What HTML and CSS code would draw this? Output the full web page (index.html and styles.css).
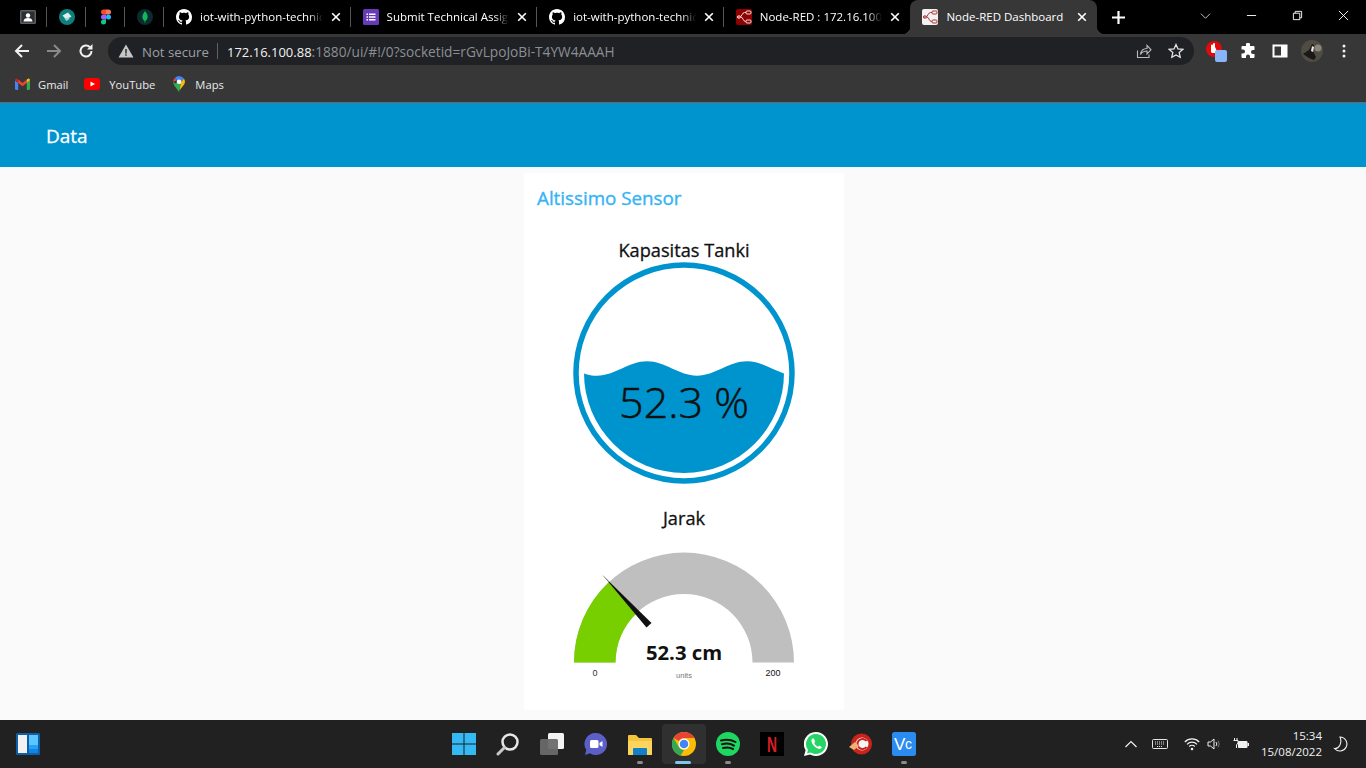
FILE: index.html
```html
<!DOCTYPE html>
<html lang="en">
<head>
<meta charset="utf-8">
<title>Node-RED Dashboard</title>
<link rel="stylesheet" href="styles.css">
</head>
<body>
<svg class="defs" width="0" height="0">
  <symbol id="gh" viewBox="0 0 16 16"><path fill="#fff" d="M8 0C3.58 0 0 3.58 0 8c0 3.54 2.29 6.53 5.47 7.59.4.07.55-.17.55-.38 0-.19-.01-.82-.01-1.49-2.01.37-2.53-.49-2.69-.94-.09-.23-.48-.94-.82-1.13-.28-.15-.68-.52-.01-.53.63-.01 1.08.58 1.23.82.72 1.21 1.87.87 2.33.66.07-.52.28-.87.51-1.07-1.78-.2-3.64-.89-3.64-3.95 0-.87.31-1.59.82-2.15-.08-.2-.36-1.02.08-2.12 0 0 .67-.21 2.2.82.64-.18 1.32-.27 2-.27.68 0 1.36.09 2 .27 1.53-1.04 2.2-.82 2.2-.82.44 1.1.16 1.92.08 2.12.51.56.82 1.27.82 2.15 0 3.07-1.87 3.75-3.65 3.95.29.25.54.73.54 1.48 0 1.07-.01 1.93-.01 2.2 0 .21.15.46.55.38A8.013 8.013 0 0016 8c0-4.42-3.58-8-8-8z"/></symbol>
  <symbol id="x" viewBox="0 0 10 10"><path d="M1.2 1.2l7.6 7.6M8.8 1.2L1.2 8.8" stroke="#fff" stroke-width="1.6" fill="none"/></symbol>
  <symbol id="flow" viewBox="0 0 16 16"><g fill="none" stroke="currentColor" stroke-width="1"><path d="M1 8h2.500c2.500 0 2.500-4.500 5-4.500H10M5 8c2 0 2 4.500 4.500 4.500H10"/><rect x="10" y="2" width="5" height="3" rx="1"/><rect x="10" y="11" width="5" height="3" rx="1"/><rect x="1.500" y="6.800" width="3" height="2.400" rx="1"/></g></symbol>
</svg>

<div class="tabstrip">
  <div class="pin"><svg class="ico16" viewBox="0 0 16 16"><rect y="1" width="16" height="14" rx="1.500" fill="#5b5f63"/><rect x="1.500" y="2.500" width="13" height="11" fill="#2b2d30"/><circle cx="8" cy="6.500" r="2.200" fill="#fff"/><path d="M3.500 12.500c0-2.500 2-3.500 4.500-3.500s4.500 1 4.500 3.500z" fill="#fff"/></svg></div>
  <div class="pin"><svg class="ico16" viewBox="0 0 16 16"><circle cx="8" cy="8" r="8" fill="#0f7f7c"/><path d="M3.500 6.500L9 3.500l3.500 4-5.500 3z" fill="#d9efee"/><path d="M5.500 9.500l2 2.500 3-2-.5-1.500z" fill="#9fd3d0"/></svg></div>
  <div class="pin"><svg class="ico16" viewBox="0 0 16 16"><path d="M8 0.500H5.500a2.500 2.500 0 000 5H8z" fill="#f24e1e"/><path d="M8 0.500h2.500a2.500 2.500 0 010 5H8z" fill="#ff7262"/><path d="M8 5.500H5.500a2.500 2.500 0 000 5H8z" fill="#a259ff"/><circle cx="10.500" cy="8" r="2.500" fill="#1abcfe"/><path d="M5.500 10.500H8V13a2.500 2.500 0 11-2.500-2.500z" fill="#0acf83"/></svg></div>
  <div class="pin"><svg class="ico16" viewBox="0 0 16 16"><circle cx="8" cy="8" r="8" fill="#0b2b2e"/><path d="M8 2c2 2.500 2.800 4.300 2.600 6.200C10.400 10.300 9 11.500 8.300 12L8.200 14h-.5l-.1-2C6.800 11.400 5.500 10.200 5.400 8.200 5.300 6.200 6.300 4.300 8 2z" fill="#12b75a"/></svg></div>

  <div class="tab sep"><svg class="ico16"><use href="#gh"/></svg><span class="title">iot-with-python-technic</span><svg class="close"><use href="#x"/></svg></div>
  <div class="tab sep"><svg class="ico16" viewBox="0 0 16 16"><rect width="16" height="16" rx="1.500" fill="#673ab7"/><path d="M3.500 4.500h1.500V6H3.500zM6 4.500h6.500V6H6zM3.500 7.300h1.500v1.500H3.500zM6 7.300h6.500v1.500H6zM3.500 10h1.500v1.500H3.500zM6 10h6.500v1.500H6z" fill="#fff"/></svg><span class="title">Submit Technical Assign</span><svg class="close"><use href="#x"/></svg></div>
  <div class="tab sep"><svg class="ico16"><use href="#gh"/></svg><span class="title">iot-with-python-technic</span><svg class="close"><use href="#x"/></svg></div>
  <div class="tab"><span class="nr nr-dark"><svg class="ico16"><use href="#flow"/></svg></span><span class="title">Node-RED : 172.16.100</span><svg class="close"><use href="#x"/></svg></div>
  <div class="tab active"><span class="nr nr-light"><svg class="ico16"><use href="#flow"/></svg></span><span class="title">Node-RED Dashboard</span><svg class="close"><use href="#x"/></svg></div>
  <div class="newtab"><svg class="plus" viewBox="0 0 12 12"><path d="M6 0v12M0 6h12" stroke="#fff" stroke-width="2"/></svg></div>
  <div class="winctl">
    <span class="wbtn"><svg class="wico" viewBox="0 0 12 12"><path d="M1 4l5 5 5-5" fill="none" stroke="#ccc"/></svg></span>
    <span class="wbtn"><svg class="wico" viewBox="0 0 12 12"><path d="M1 6h10" stroke="#fff"/></svg></span>
    <span class="wbtn"><svg class="wico" viewBox="0 0 12 12"><path d="M1.500 3.500h7v7h-7zM3.500 3.500v-2h7v7h-2" fill="none" stroke="#fff"/></svg></span>
    <span class="wbtn"><svg class="wico" viewBox="0 0 12 12"><path d="M1 1l10 10M11 1L1 11" stroke="#fff"/></svg></span>
  </div>
</div>

<div class="toolbar">
  <span class="tbtn"><svg class="ico16" viewBox="0 0 16 16"><path d="M15 8H2M8 2L2 8l6 6" fill="none" stroke="#f1f1f1" stroke-width="2"/></svg></span>
  <span class="tbtn"><svg class="ico16" viewBox="0 0 16 16"><path d="M1 8h13M8 2l6 6-6 6" fill="none" stroke="#8a8a8a" stroke-width="2"/></svg></span>
  <span class="tbtn"><svg class="ico16" viewBox="0 0 16 16"><path d="M13.500 8a5.500 5.500 0 11-1.700-4" fill="none" stroke="#f1f1f1" stroke-width="2"/><path d="M14.500 1v5.500H9z" fill="#f1f1f1"/></svg></span>
  <div class="omni">
    <svg class="ico16" viewBox="0 0 16 16"><path d="M8 1.500L15.500 14.500H.5z" fill="#c4c7c5"/><path d="M7.300 6h1.400v4.500H7.300zM7.300 11.300h1.400v1.400H7.300z" fill="#202124"/></svg>
    <span class="insecure">Not secure</span>
    <span class="omnisep"></span>
    <span class="url"><b class="host">172.16.100.88</b><span class="path">:1880/ui/#!/0?socketid=rGvLpoJoBi-T4YW4AAAH</span></span>
    <span class="omni-right">
      <span class="tbtn"><svg class="ico16" viewBox="0 0 16 16"><path d="M1.500 7.500v7h11.500v-3" fill="none" stroke="#bbb" stroke-width="1.100"/><path d="M4.500 11.500c.5-4 3.500-6 6.500-6V2.500l4 4.300-4 4V8c-3 0-5 1-6.500 3.500z" fill="none" stroke="#bbb" stroke-width="1.100"/></svg></span>
      <span class="tbtn"><svg class="ico16" viewBox="0 0 16 16"><path d="M8 1.500l2 4.400 4.800.5-3.600 3.200 1 4.700L8 11.900l-4.200 2.400 1-4.700L1.200 6.400 6 5.900z" fill="none" stroke="#e3e3e3" stroke-width="1.300"/></svg></span>
    </span>
  </div>
  <span class="tbtn ml6 ext"><svg class="ico22" viewBox="0 0 22 22"><circle cx="9" cy="9" r="8" fill="#e00a0a"/><path d="M6 12V5.500a1 1 0 012 0V4a1 1 0 012 0v3l1.500 3-1 3H7z" fill="#fff"/><rect x="10" y="10" width="12" height="12" rx="2" fill="#8ab4f8"/></svg></span>
  <span class="tbtn"><svg class="ico16" viewBox="0 0 16 16"><path d="M6 1.500a2 2 0 014 0V3h3.500a1 1 0 011 1v3H13a2 2 0 000 4h1.500v3a1 1 0 01-1 1H10v-1.500a2 2 0 00-4 0V15H2.500a1 1 0 01-1-1v-3.500H3a2 2 0 000-4H1.500V4a1 1 0 011-1H6z" fill="#fff"/></svg></span>
  <span class="tbtn"><svg class="ico16" viewBox="0 0 16 16"><path d="M1.500 2.500h13v11h-13z" fill="none" stroke="#fff" stroke-width="2"/><rect x="9" y="2" width="6" height="12" fill="#fff"/></svg></span>
  <span class="tbtn"><svg class="ico22" viewBox="0 0 22 22"><circle cx="11" cy="11" r="11" fill="#4f4c44"/><path d="M2 14l6-4 3-6 2 1-1 6 3 6-2 3-5-2z" fill="#1a1916"/><path d="M11 6l2 1-1 5-2-1z" fill="#e8e8e8"/><circle cx="17" cy="8" r="3.500" fill="#8a867a"/></svg></span>
  <span class="tbtn"><svg class="ico16" viewBox="0 0 16 16"><circle cx="8" cy="3" r="1.500" fill="#f1f1f1"/><circle cx="8" cy="8" r="1.500" fill="#f1f1f1"/><circle cx="8" cy="13" r="1.500" fill="#f1f1f1"/></svg></span>
</div>

<div class="bookmarks">
  <span class="bm bm-g"><svg class="ico-bm" viewBox="0 0 14 11"><path d="M0 2v8a1 1 0 001 1h2V4.500z" fill="#4285f4"/><path d="M14 2v8a1 1 0 01-1 1h-2V4.500z" fill="#34a853"/><path d="M0 2a1.500 1.500 0 012.400-1.200L3 1.300V4.500z" fill="#c5221f"/><path d="M3 1.300L7 4.500l4-3.200v3.200L7 7.500 3 4.500z" fill="#ea4335"/><path d="M14 2a1.500 1.500 0 00-2.400-1.200l-.6.500v3.200z" fill="#fbbc04"/></svg>Gmail</span>
  <span class="bm bm-y"><svg class="ico-bm" viewBox="0 0 16 12"><rect width="16" height="12" rx="3" fill="#f00"/><path d="M6.500 3.500L11 6l-4.500 2.500z" fill="#fff"/></svg>YouTube</span>
  <span class="bm bm-m"><svg class="ico-map" viewBox="0 0 12 16"><path d="M6 16C5 12 0 9.500 0 5.800L2.500 8z" fill="#34a853"/><path d="M6 16c1-4 6-6.500 6-10.200L8 9z" fill="#fbbc04"/><path d="M2 1.700A6 6 0 000 5.800L4 4.400z" fill="#ea4335"/><path d="M2 1.700A6 6 0 0111 2.700L8 6 4 4.400z" fill="#4285f4"/><path d="M11 2.700A6 6 0 0112 5.800L7 13 2 8l6-2z" fill="#fbbc04"/><path d="M1 9l3 -3 4 2-2 8z" fill="#34a853"/><circle cx="6" cy="5.800" r="2.200" fill="#fff"/></svg>Maps</span>
</div>

<div class="ui-header"><span class="ui-title">Data</span></div>

<main class="content">
  <section class="card">
    <h2 class="group">Altissimo Sensor</h2>
    <h3 class="wlabel first">Kapasitas Tanki</h3>
    <svg class="liquid" viewBox="0 0 222 222" width="222" height="222">
      <defs><clipPath id="inner"><circle cx="111" cy="111" r="100"/></clipPath></defs>
      <circle cx="111" cy="111" r="108" fill="none" stroke="#0094ce" stroke-width="5.500"/>
      <path clip-path="url(#inner)" fill="#0094ce" d="M-26 99.300C-8 99.300 6 113.700 24 113.700S56 99.300 74 99.300 106 113.700 124 113.700 156 99.300 174 99.300 206 113.700 224 113.700V222H-26z"/>
      <text class="ltext" x="111" y="155.500" text-anchor="middle">52.3 %</text>
    </svg>
    <h3 class="wlabel second">Jarak</h3>
    <svg class="gauge" viewBox="0 0 240 146" width="240" height="146">
      <path fill="#bfbfbf" d="M10 120.500a110 110 0 01220 0h-41.500a68.500 68.500 0 00-137 0z"/>
      <path fill="#78cf00" d="M10 120.500A110 110 0 0145 40l28.700 30.200A68.500 68.500 0 0051.500 120.500z"/>
      <path fill="#111" d="M39 33.500L87.500 81l-5 4.500z"/>
      <path stroke="#999" stroke-width=".6" d="M39 33.500l6 6.500"/>
      <text class="gval" x="120" y="118" text-anchor="middle">52.3 cm</text>
      <text class="gmin" x="31" y="134" text-anchor="middle">0</text>
      <text class="gunit" x="120" y="136" text-anchor="middle">units</text>
      <text class="gmax" x="209" y="134" text-anchor="middle">200</text>
    </svg>
  </section>
</main>

<footer class="taskbar">
  <div class="tb-left"><svg class="widgets" viewBox="0 0 24 22"><rect width="24" height="22" rx="1.500" fill="#0f5fa8"/><rect x="2" y="2" width="9" height="18" fill="#f2f2f2"/><rect x="13" y="2" width="9" height="10" fill="#5cc6ff"/><rect x="13" y="12" width="9" height="4" fill="#22a3f5"/><rect x="13" y="16" width="9" height="4" fill="#0d86e6"/></svg></div>
  <div class="tb-center">
    <span class="tk"><svg class="ico24" viewBox="0 0 24 24"><path d="M0 1h11.500v10.500H0zM12.500 1H24v10.500H12.500zM0 12.500h11.500V23H0zM12.500 12.500H24V23H12.500z" fill="#35b9f5"/></svg></span>
    <span class="tk"><svg class="ico24" viewBox="0 0 24 24"><circle cx="14" cy="10" r="7.500" fill="none" stroke="#e8e8e8" stroke-width="2.500"/><path d="M8.500 15.500L2 22" stroke="#c8c8c8" stroke-width="3" stroke-linecap="round"/></svg></span>
    <span class="tk"><svg class="ico24" viewBox="0 0 24 24"><rect x="8" y="1" width="16" height="16" rx="1.500" fill="#f4f4f4"/><rect x="0" y="7" width="18" height="16" rx="1.500" fill="#6a6a6a" opacity=".95"/></svg></span>
    <span class="tk"><svg class="ico24" viewBox="0 0 24 24"><path d="M12 1a11 11 0 11-6 20.200L1 23l1.300-5A11 11 0 0112 1z" fill="#5b5fc7"/><rect x="6" y="8" width="8.500" height="8" rx="1.500" fill="#fff"/><path d="M15.500 11l3-2v6l-3-2z" fill="#fff"/></svg></span>
    <span class="tk dot"><svg class="ico24" viewBox="0 0 24 24"><path d="M0 4a1 1 0 011-1h7l3 3h12a1 1 0 011 1v15a1 1 0 01-1 1H1a1 1 0 01-1-1z" fill="#f6c33c"/><path d="M0 9h24v13a1 1 0 01-1 1H1a1 1 0 01-1-1z" fill="#fcd55f"/><path d="M5 17a1 1 0 011-1h12a1 1 0 011 1v6H5z" fill="#0f80c9"/></svg></span>
    <span class="tk chrome"><svg class="ico24" viewBox="0 0 24 24"><circle cx="12" cy="12" r="12" fill="#fbbc04"/><path d="M12 0a12 12 0 0110.400 6H12a6 6 0 00-5.200 3L1.600 6A12 12 0 0112 0z" fill="#ea4335"/><path d="M1.600 6l5.200 9a6 6 0 005.200 3l-3.600 5.700A12 12 0 011.600 6z" fill="#34a853"/><circle cx="12" cy="12" r="5.500" fill="#fff"/><circle cx="12" cy="12" r="4.300" fill="#4285f4"/></svg></span>
    <span class="tk dot"><svg class="ico24" viewBox="0 0 24 24"><circle cx="12" cy="12" r="12" fill="#1ed760"/><path d="M5 8.500c5-1.500 10-1 14.500 1.500M6 12.300c4-1.200 8.500-.8 12 1.300M7 16c3.500-1 7-.6 10 1" fill="none" stroke="#111" stroke-width="2" stroke-linecap="round"/></svg></span>
    <span class="tk"><svg class="ico24" viewBox="0 0 24 24"><rect width="24" height="24" fill="#000"/><text class="nflx" x="12" y="20" text-anchor="middle" textLength="10" lengthAdjust="spacingAndGlyphs">N</text></svg></span>
    <span class="tk"><svg class="ico24" viewBox="0 0 24 24"><path d="M12 0a12 12 0 11-6 22.400L0 24l1.600-5.800A12 12 0 0112 0z" fill="#fff"/><path d="M12 2a10 10 0 11-5.300 18.500l-3.700 1 1-3.600A10 10 0 0112 2z" fill="#25d366"/><path d="M8.500 6.500c-1.500 1-1.500 3 0 5.500s4 4.500 6.500 5c1.500.2 2.500-.8 2.800-2l-2.600-1.500-1.200 1.300c-1.500-.5-3-2-3.800-3.700l1-1.300L9.800 6.500z" fill="#fff"/></svg></span>
    <span class="tk"><svg class="ico24" viewBox="0 0 24 24"><circle cx="13.500" cy="12" r="10.500" fill="#c8241c"/><circle cx="14" cy="12" r="6.500" fill="#f4f4f4"/><path d="M18.500 9a5 5 0 100 6" fill="none" stroke="#c8241c" stroke-width="2"/><path d="M1 15l6-5 4 4-5 4z" fill="#f0b070"/></svg></span>
    <span class="tk dot"><svg class="ico24" viewBox="0 0 24 24"><rect width="24" height="24" rx="2.500" fill="#2a8cf0"/><text class="vnc" x="2" y="18">V</text><text class="vnc small" x="13" y="17">c</text></svg></span>
  </div>
  <div class="tb-right">
    <svg class="tray t-up" viewBox="0 0 14 14"><path d="M1.500 10L7 4.500 12.500 10" fill="none" stroke="#f1f1f1" stroke-width="1.200"/></svg>
    <svg class="tray t-kb" viewBox="0 0 16 12"><rect x=".5" y="1.500" width="15" height="9" rx="1" fill="none" stroke="#e6e6e6"/><path d="M3 4h10M3 6h10M5 8.500h6" stroke="#e6e6e6" stroke-dasharray="1 1"/></svg>
    <svg class="tray t-wifi" viewBox="0 0 16 14"><path d="M.8 5a10 10 0 0114.400 0M3 7.300a7 7 0 0110 0M5.200 9.500a4 4 0 015.600 0" fill="none" stroke="#f1f1f1" stroke-width="1.200"/><circle cx="8" cy="12" r="1.300" fill="#f1f1f1"/></svg>
    <svg class="tray t-vol" viewBox="0 0 16 14"><path d="M1 5h2.500L7 2v10L3.500 9H1z" fill="none" stroke="#f1f1f1"/><path d="M9 5a3 3 0 010 4" fill="none" stroke="#f1f1f1"/><path d="M11 3.500a6 6 0 010 7" fill="none" stroke="#777"/></svg>
    <svg class="tray t-bat" viewBox="0 0 16 12"><path d="M1.500 0v2M4 0v2M.5 2.500h4.500V5L3.500 7v3" fill="none" stroke="#f1f1f1"/><rect x="5" y="3" width="9.500" height="7" rx="1" fill="#f1f1f1"/><rect x="14.500" y="5" width="1.500" height="3" fill="#f1f1f1"/></svg>
    <div class="clock"><span>15:34</span><span>15/08/2022</span></div>
    <svg class="tray t-moon" viewBox="0 0 16 16"><path d="M7 1a7 7 0 11-5.500 11.500C6 13 9.500 7 7 1z" fill="none" stroke="#f1f1f1" stroke-width="1.100"/></svg>
  </div>
</footer>
</body>
</html>
```

FILE: styles.css
```css
* { box-sizing: border-box; }
html, body { margin: 0; padding: 0; }
body {
  width: 1366px;
  height: 768px;
  overflow: hidden;
  display: flex;
  flex-direction: column;
  background: #fafafa;
  font-family: "Open Sans", "Liberation Sans", sans-serif;
  color: #111;
}
.defs { position: absolute; }
svg { display: block; flex: none; }
.ico16 { width: 16px; height: 16px; }
.ico22 { width: 22px; height: 22px; }
.ico24 { width: 24px; height: 24px; }

/* Tab strip */
.tabstrip { height: 34px; background: #000; display: flex; flex: none; color: #fff; }
.pin { width: 39px; height: 34px; display: flex; align-items: center; justify-content: center; position: relative; }
.pin:first-child { width: 47px; padding-left: 8px; }
.pin::after, .tab.sep::after {
  content: "";
  position: absolute;
  right: 0;
  top: 7px;
  height: 20px;
  width: 1px;
  background: #555;
}
.tab {
  width: 186.600px;
  height: 34px;
  padding: 0 10px 0 12px;
  display: flex;
  align-items: center;
  gap: 8px;
  position: relative;
}
.title {
  flex: 1;
  min-width: 0;
  font-size: 11.500px;
  line-height: 16px;
  margin-top: -1px;
  white-space: nowrap;
  -webkit-mask-image: linear-gradient(to right, #000 88%, transparent 100%);
  mask-image: linear-gradient(to right, #000 88%, transparent 100%);
}
.close { width: 10px; height: 10px; }
.tab.active { background: #373737; border-radius: 8px 8px 0 0; }
.tab.active .title { -webkit-mask-image: none; mask-image: none; }
.tab.active::before, .tab.active::after {
  content: "";
  position: absolute;
  bottom: 0;
  width: 8px;
  height: 8px;
}
.tab.active::before { left: -8px; background: radial-gradient(circle at 0 0, transparent 8px, #373737 8.500px); }
.tab.active::after { right: -8px; background: radial-gradient(circle at 100% 0, transparent 8px, #373737 8.500px); }
.nr { width: 16px; height: 16px; border-radius: 2px; flex: none; }
.nr-dark { background: #8f0000; color: #f0dcdc; }
.nr-light { background: #f2f2f2; color: #a33; }
.newtab { width: 44px; display: flex; align-items: center; justify-content: center; margin-left: 0; }
.plus { width: 13px; height: 13px; }
.winctl { margin-left: auto; display: flex; padding-right: 0; }
.wbtn { width: 46px; height: 30px; display: flex; align-items: center; justify-content: center; }
.wico { width: 11px; height: 11px; }

/* Toolbar */
.toolbar {
  height: 34px;
  flex: none;
  background: #373737;
  display: flex;
  align-items: center;
  padding-left: 6px;
}
.tbtn { width: 32px; height: 28px; display: flex; align-items: center; justify-content: center; flex: none; }
.omni {
  width: 1086px;
  height: 28px;
  margin-left: 6px;
  background: #202124;
  border-radius: 14px;
  display: flex;
  align-items: center;
  padding: 0 2px 0 10px;
  font-size: 13px;
}
.insecure { margin-left: 8px; color: #9aa0a6; font-size: 13.200px; width: 67px; white-space: nowrap; padding-top: 1px; }
.omnisep { width: 1px; height: 16px; background: #5f6368; margin-left: 8px; }
.url { margin-left: 9px; color: #8b8f94; white-space: nowrap; padding-top: 1px; }
.path { font-size: 13.700px; }
.host { color: #f1f1f1; font-weight: 400; }
.omni-right { margin-left: auto; display: flex; }
.ml6 { margin-left: 6px; }

/* Bookmarks */
.bookmarks {
  height: 35px;
  flex: none;
  background: #373737;
  border-bottom: 1px solid #6a6a6a;
  display: flex;
  align-items: center;
  padding-bottom: 2px;
  color: #e8eaed;
  font-size: 11.200px;
}
.bm { display: flex; align-items: center; white-space: nowrap; }
.bm-g { margin-left: 15px; gap: 8px; }
.bm-y { margin-left: 16px; gap: 9px; }
.bm-m { margin-left: 18px; gap: 10px; }
.ico-bm { width: 15px; height: 12px; }
.bm-y .ico-bm { width: 16px; }
.ico-map { width: 12px; height: 16px; }

/* Node-RED header */
.ui-header {
  height: 64px;
  flex: none;
  background: #0094ce;
  display: flex;
  align-items: center;
  padding: 2px 0 0 46px;
}
.ui-title { color: #fff; font-size: 19px; font-weight: 400; -webkit-text-stroke: .3px #fff; }

/* Content */
.content {
  flex: 1;
  min-height: 0;
  display: flex;
  justify-content: center;
  padding: 6px 0 0 2px;
  background: #fafafa;
}
.card {
  width: 320px;
  height: 537px;
  background: #fff;
  display: flex;
  flex-direction: column;
  align-items: center;
}
.group {
  align-self: flex-start;
  margin: 13px 0 0 13px;
  font-size: 18.800px;
  line-height: 24px;
  font-weight: 400;
  -webkit-text-stroke: .35px #35b3f5;
  color: #35b3f5;
}
.wlabel { margin: 0; font-size: 18.200px; line-height: 24px; font-weight: 400; -webkit-text-stroke: .3px #111; color: #111; }
.wlabel.first { margin-top: 28px; }
.wlabel.second { margin-top: 22px; }
.liquid { margin-top: 0; }
.ltext { font-size: 43px; fill: #111; font-weight: 300; stroke: #111; stroke-width: .5px; }
.gauge { margin-top: 12px; }
.gval { font-size: 20.300px; font-weight: 700; fill: #111; }
.gmin, .gmax { font-size: 9px; font-family: "Liberation Sans", sans-serif; fill: #333; }
.gmax { fill: #111; }
.gunit { font-size: 7.500px; font-family: "Liberation Sans", sans-serif; fill: #777; }

/* Taskbar */
.taskbar {
  height: 48px;
  flex: none;
  background: #212121;
  display: flex;
  align-items: center;
  color: #f1f1f1;
}
.tb-left { width: 442px; padding-left: 16px; }
.widgets { width: 24px; height: 22px; }
.tb-center { display: flex; width: 484px; }
.tk { width: 44px; height: 40px; display: flex; align-items: center; justify-content: center; position: relative; border-radius: 4px; }
.tk.dot::after, .tk.chrome::after {
  content: "";
  position: absolute;
  bottom: 0;
  left: 19px;
  width: 6px;
  height: 3px;
  border-radius: 2px;
  background: #8a8a8a;
}
.tk.chrome { background: #303030; }
.tk.chrome::after { left: 13px; width: 16px; background: #7fc6ec; }
.nflx { font-family: "Liberation Sans", sans-serif; font-weight: 700; font-size: 22px; fill: #d81f26; }
.vnc { font-family: "Liberation Sans", sans-serif; font-size: 17px; fill: #fff; }
.vnc.small { font-size: 14px; }
.tb-right { flex: 1; display: flex; align-items: center; }
.tray { height: 14px; }
.t-up { width: 14px; margin-left: 198px; }
.t-kb { width: 16px; margin-left: 14px; height: 12px; }
.t-wifi { width: 16px; margin-left: 16px; }
.t-vol { width: 16px; margin-left: 7px; }
.t-bat { width: 16px; margin-left: 10px; height: 12px; }
.clock {
  width: 73px;
  margin-left: 0;
  display: flex;
  flex-direction: column;
  align-items: flex-end;
  font-size: 11.500px;
  line-height: 16px;
}
.t-moon { width: 16px; height: 16px; margin-left: 11px; }
```
